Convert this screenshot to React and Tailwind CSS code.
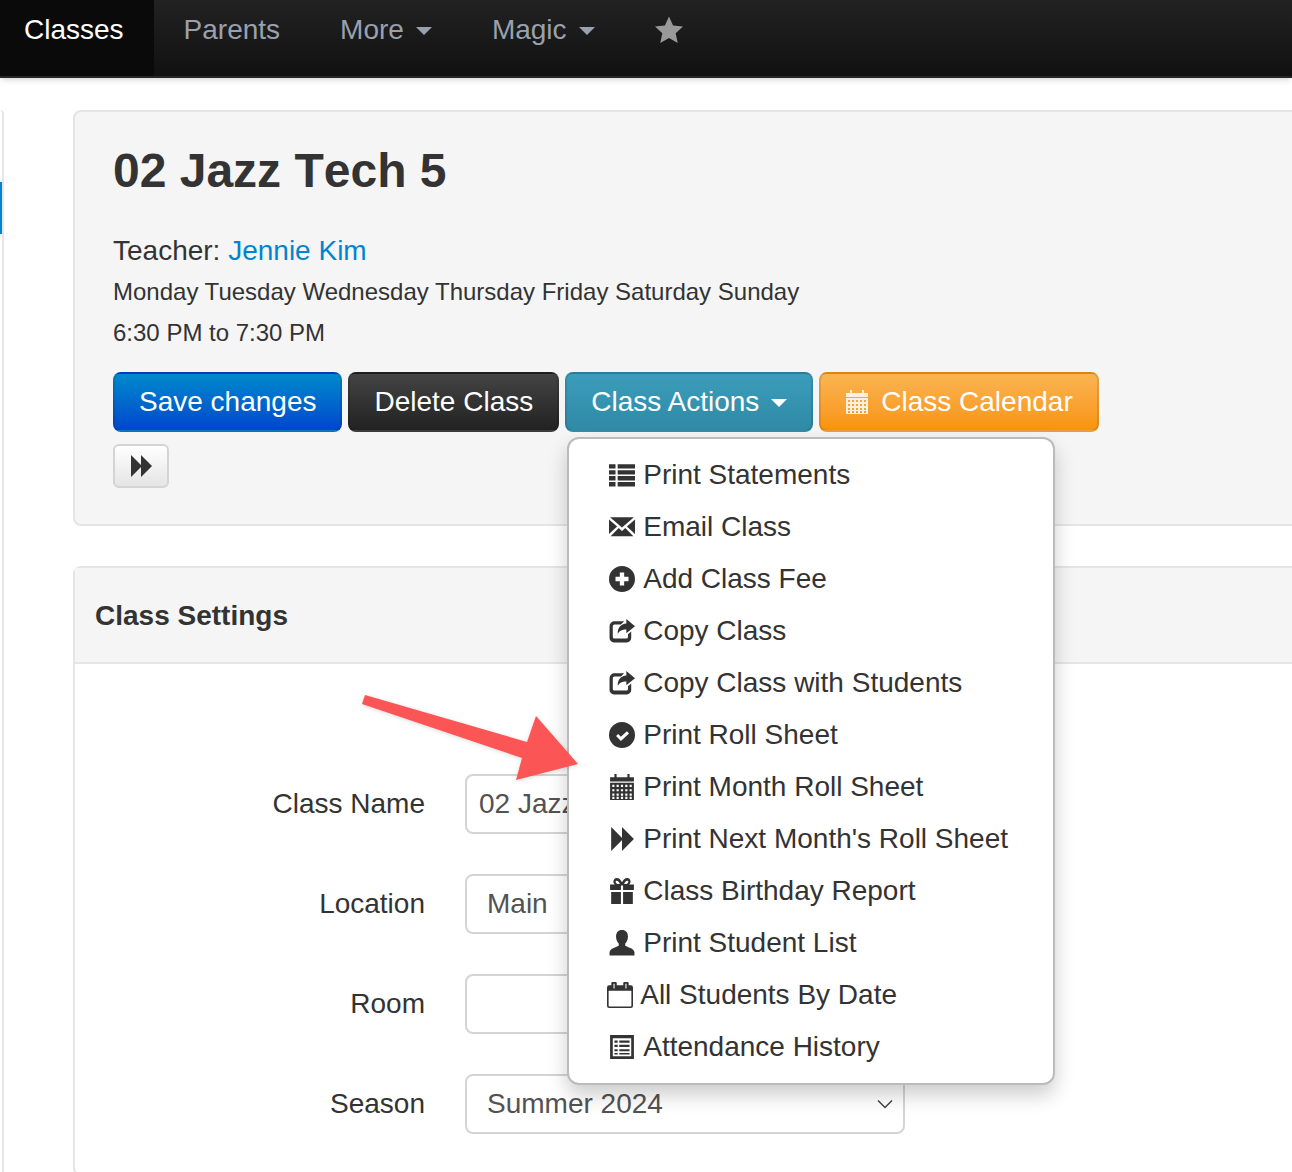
// App.jsx
// Class detail page with the Class Actions menu open

const DARK = '#333333';

// holes of the calendar grid, 5 across and 3 down
const calendarHoles = [10, 14, 18, 21]
  .flatMap(y => [3, 7, 11, 15, 19].map(x => `M${x} ${y}h2v2h-2z`))
  .join('');

// glyph style icons, all on a 24 box
const ThList = () => (
  <path d="M0 2h6v4H0zM8 2h16v4H8zM0 7.500h6v4H0zM8 7.500h16v4H8zM0 13h6v4H0zM8 13h16v4H8zM0 18.500h6v4H0zM8 18.500h16v4H8z" />
);
const Envelope = () => (
  <path d="M1 3h22L12 12.500zM0 5l7.500 6.500L0 18.500zM24 5l-7.500 6.500 7.500 7zM1.500 20.500l7.500-7.500 3 2.600 3-2.600 7.500 7.500z" />
);
const PlusSign = () => (
  <path fillRule="evenodd" d="M12 0a12 12 0 1 0 0 24 12 12 0 0 0 0-24zM10 6h4v4h4v4h-4v4h-4v-4H6v-4h4z" />
);
const Share = () => (
  <path d="M5 3h9l-3 3H5a1.500 1.500 0 0 0-1.500 1.500v10A1.500 1.500 0 0 0 5 19h11a1.500 1.500 0 0 0 1.500-1.500V15l3-2.500v6A4 4 0 0 1 16.500 22.500h-12A4 4 0 0 1 .5 18.500v-11A4.500 4.500 0 0 1 5 3zM16 1l8 6.500-8 6.500v-3.500c-4 0-6 1-8 4 0-6 3-9 8-9.500z" />
);
const OkSign = () => (
  <path fillRule="evenodd" d="M12 0a12 12 0 1 0 0 24 12 12 0 0 0 0-24zM16.500 8.500l2 2-7.500 7-4.500-4.500 2-2 2.500 2.500z" />
);
const Calendar = () => (
  <path fillRule="evenodd" d={`M5 0h2v3h10V0h2v3h4v4H1V3h4zM1 8h22v16H1z${calendarHoles}`} />
);
const Forward = () => <path d="M2 1l11 11L2 23zM12 1l11 11-11 11z" />;
const Gift = () => (
  <path d="M7 0c2.500 0 4 2 5 4 1-2 2.500-4 5-4 3 0 4 4.500 1.500 6H23v5H13V7h-2v4H1V6h4.500C3 4.500 4 0 7 0zm0 2.500C5.500 2.500 6 5 8 5.500h2C9.500 4 8.500 2.500 7 2.500zm10 0c-1.500 0-2.500 1.500-3 3h2c2-.5 2.500-3 1-3zM2 13h9v11H2zM13 13h9v11h-9z" />
);
const User = () => (
  <path d="M12 0c3.500 0 5.500 2.500 5.500 6 0 2.500-1 5-2.500 6.500v2c2 1.500 8 2 8.500 6v3H.5v-3c.5-4 6.500-4.500 8.500-6v-2C7.500 11 6.500 8.500 6.500 6 6.500 2.500 8.500 0 12 0z" />
);
const CalendarOutline = () => (
  <path fillRule="evenodd" d="M5 0h3a1 1 0 0 1 1 1v2h6V1a1 1 0 0 1 1-1h3a1 1 0 0 1 1 1v2h2a2 2 0 0 1 2 2v17a2 2 0 0 1-2 2H2a2 2 0 0 1-2-2V5a2 2 0 0 1 2-2h2V1a1 1 0 0 1 1-1zM6 1.500V6h1V1.500zm11 0V6h1V1.500zM1.500 8v14c0 .3.200.5.500.5h20c.3 0 .500-.2.500-.5V8z" />
);
const ListAlt = () => (
  <path fillRule="evenodd" d="M1 1h22v22H1zM3.500 4v16.500h17V4zM5 6h3v2H5zM9.500 6H19v2H9.500zM5 10h3v2H5zM9.500 10H19v2H9.500zM5 14h3v2H5zM9.500 14H19v2H9.500zM5 17.500h3v1.500H5zM9.500 17.500H19v1.500H9.500z" />
);

function Glyph({ size = 26, color = DARK, children }) {
  return (
    <svg width={size} height={size} viewBox="0 0 24 24" fill={color} className="shrink-0">
      {children}
    </svg>
  );
}

const menuItems = [
  { label: 'Print Statements', icon: <ThList /> },
  { label: 'Email Class', icon: <Envelope /> },
  { label: 'Add Class Fee', icon: <PlusSign /> },
  { label: 'Copy Class', icon: <Share /> },
  { label: 'Copy Class with Students', icon: <Share /> },
  { label: 'Print Roll Sheet', icon: <OkSign /> },
  { label: 'Print Month Roll Sheet', icon: <Calendar /> },
  { label: "Print Next Month's Roll Sheet", icon: <Forward /> },
  { label: 'Class Birthday Report', icon: <Gift /> },
  { label: 'Print Student List', icon: <User /> },
  // this one sits a little further left in the menu
  { label: 'All Students By Date', icon: <CalendarOutline />, shift: '-ml-0.5 gap-1.75' },
  { label: 'Attendance History', icon: <ListAlt /> },
];

const Caret = ({ className = 'border-t-gray-400' }) => (
  <span className={`ml-3 mt-0.5 border-x-8 border-t-8 border-x-transparent ${className}`} />
);

function NavLink({ children, className = 'px-7.5 text-gray-400' }) {
  return <a className={`flex items-center pt-3.5 pb-7.5 leading-8 ${className}`}>{children}</a>;
}

function Field({ label, children }) {
  return (
    <div className="flex items-center gap-10 pl-7.5 mb-10">
      <label className="w-80 text-right leading-8">{label}</label>
      <div className="w-110 h-15 flex items-center justify-between border-2 border-neutral-300 rounded-lg bg-white text-neutral-600">
        {children}
      </div>
    </div>
  );
}

export default function App() {
  return (
    <div className="relative w-full h-screen overflow-hidden bg-white text-[28px] text-[#333333] font-['Liberation_Sans',Arial,sans-serif]">
      {/* Top bar */}
      <nav className="relative flex bg-linear-to-b from-[#222222] to-[#111111] border-b-2 border-neutral-800 shadow-md">
        <NavLink className="pl-6 pr-7.5 bg-neutral-950 text-white">Classes</NavLink>
        <NavLink>Parents</NavLink>
        <NavLink>More<Caret /></NavLink>
        <NavLink>Magic<Caret /></NavLink>
        <NavLink>
          <svg width="28" height="28" viewBox="0 0 24 24" fill="#999999">
            <path d="M12 .5l3.500 7.700 8.500.9-6.300 5.700 1.800 8.400L12 18.900l-7.500 4.300 1.800-8.400L0 9.100l8.500-.9z" />
          </svg>
        </NavLink>
      </nav>

      <div className="flex pt-8">
        {/* Sidebar edge */}
        <div className="w-1 h-screen border-r-2 border-neutral-200 rounded-tr-md pt-18">
          <div className="w-0.5 h-13 bg-sky-600" />
        </div>

        <main className="flex-1 ml-px pl-17 -mr-4">
          {/* Class header */}
          <section className="border-2 border-neutral-200 rounded-lg bg-neutral-100 px-9.5 pt-8.75 pb-9">
            <h1 className="text-5xl leading-none font-bold [font-kerning:none]">02 Jazz Tech 5</h1>
            <p className="mt-9 leading-10">
              Teacher: <a className="text-sky-600">Jennie Kim</a>
            </p>
            <p className="mt-px text-2xl leading-10">Monday Tuesday Wednesday Thursday Friday Saturday Sunday</p>
            <p className="mt-px text-2xl leading-10">6:30 PM to 7:30 PM</p>

            <div className="mt-4.75 flex gap-1.5">
              <button className="h-15 px-6 rounded-lg border-2 border-black/10 bg-linear-to-b from-[#0088cc] to-[#0044cc] text-white">
                Save changes
              </button>
              <button className="h-15 px-6 rounded-lg border-2 border-black/10 bg-linear-to-b from-[#444444] to-[#222222] text-white">
                Delete Class
              </button>
              <div className="relative">
                <button className="h-15 px-6 flex items-center rounded-lg border-2 border-black/10 bg-linear-to-b from-[#3b9dbb] to-[#2f8aa6] text-white">
                  Class Actions
                  <Caret className="border-t-white" />
                </button>
                {/* Open menu */}
                <ul className="absolute z-10 top-16.25 left-0.5 w-122 py-2.5 border-2 border-[#bbbbbb] rounded-xl bg-white shadow-[0_10px_20px_rgba(0,0,0,0.2)]">
                  {menuItems.map(item => (
                    <li key={item.label} className={`flex items-center px-10 py-2.5 leading-8 whitespace-nowrap ${item.shift || 'gap-2'}`}>
                      <Glyph>{item.icon}</Glyph>
                      {item.label}
                    </li>
                  ))}
                </ul>
              </div>
              <button className="h-15 px-6 flex items-center gap-3 rounded-lg border-2 border-black/10 bg-linear-to-b from-[#fbb450] to-[#f89406] text-white">
                <Glyph size={24} color="#fdf0df"><Calendar /></Glyph>
                Class Calendar
              </button>
            </div>

            <button className="mt-3 w-14 h-11 flex items-center justify-center rounded-md border-2 border-neutral-300 bg-linear-to-b from-white to-neutral-200">
              <Glyph size={24}><Forward /></Glyph>
            </button>
          </section>

          {/* Class settings */}
          <section className="mt-10 border-2 border-neutral-200 rounded-lg">
            <h2 className="px-5 pt-8 pb-7.5 leading-8 font-bold bg-neutral-100 border-b-2 border-neutral-200">Class Settings</h2>
            <form className="pt-27.5">
              <Field label="Class Name">
                <span className="pl-3">02 Jazz Tech 5</span>
              </Field>
              <Field label="Location">
                <span className="pl-5">Main</span>
              </Field>
              <Field label="Room" />
              <Field label="Season">
                <span className="pl-5">Summer 2024</span>
                <svg width="20" height="20" viewBox="0 0 20 20" fill="none" stroke="#444444" strokeWidth="1.500" className="mr-2">
                  <path d="M3 6.500l7 7 7-7" />
                </svg>
              </Field>
            </form>
          </section>
        </main>
      </div>

      {/* Annotation arrow */}
      <svg viewBox="0 0 224 96" fill="#fb5555" className="absolute z-20 left-90 top-172 w-56 h-24 drop-shadow-sm">
        <path d="M5 7L167 54 176 28 218 76 156 92 162 70 2 16z" />
      </svg>
    </div>
  );
}
